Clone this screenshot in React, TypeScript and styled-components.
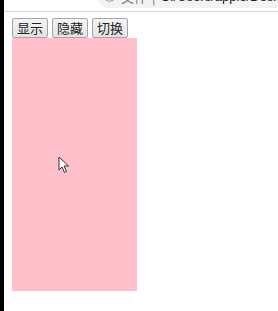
import React from "react";
import styled, { createGlobalStyle } from "styled-components";

const Global = createGlobalStyle`
  html, body { margin: 0; padding: 0; background: #fff; }
  body { font-family: "Noto Sans CJK SC", "Liberation Sans", sans-serif; }
`;

const Frame = styled.div`
  width: 278px;
  height: 311px;
  display: flex;
  overflow: hidden;
`;

const LeftEdge = styled.div`
  width: 4px;
  flex: none;
  background: #000;
`;

const Window = styled.div`
  flex: 1;
  display: flex;
  flex-direction: column;
  min-width: 0;
`;

const Chrome = styled.div`
  height: 11px;
  flex: none;
  overflow: hidden;
  border-bottom: 1px solid #d9d9d9;
  background: #fff;
`;

const ChromeInner = styled.div`
  display: flex;
  align-items: center;
  height: 24px;
  margin-top: -16px;
  padding-left: 11px;
  gap: 14px;
  color: #b0b0b0;
  font-size: 14px;
  font-family: "Liberation Sans", sans-serif;
`;

const NavIcon = styled.span`
  width: 14px;
  text-align: center;
`;

const Pill = styled.div`
  flex: 1;
  height: 24px;
  margin-left: 0;
  border-radius: 12px 0 0 12px;
  background: #f1f3f4;
  display: flex;
  align-items: center;
  padding-left: 6px;
  gap: 5px;
  font-size: 13px;
  white-space: nowrap;
  color: #777;
`;

const Label = styled.span`
  color: #777;
  font-family: "Noto Sans CJK SC", sans-serif;
`;

const Url = styled.span`
  color: #202124;
  font-family: "Liberation Sans", sans-serif;
`;

const Page = styled.div`
  padding: 6px 8px 0 8px;
  display: flex;
  flex-direction: column;
  align-items: flex-start;
`;

const Toolbar = styled.div`
  display: flex;
  gap: 4px;
`;

const Button = styled.button`
  height: 20px;
  width: 36px;
  padding: 0;
  font-size: 13px;
  line-height: 18px;
  font-family: "Noto Sans CJK SC", sans-serif;
  color: #222;
  background: linear-gradient(#f5f5f5, #e3e3e3);
  border: 1px solid #a6a6a6;
  border-radius: 2px;
  margin: 0;
`;

const PinkBox = styled.div`
  width: 125px;
  height: 253px;
  background: #ffc0cb;
  position: relative;
`;

const Cursor = styled.svg`
  position: absolute;
  left: 46px;
  top: 118px;
`;

export default function App() {
  return (
    <>
      <Global />
      <Frame>
        <LeftEdge />
        <Window>
          <Chrome>
            <ChromeInner>
              <NavIcon>←</NavIcon>
              <NavIcon>→</NavIcon>
              <NavIcon>↻</NavIcon>
              <Pill>
                <span>ⓘ</span>
                <Label>文件</Label>
                <Label>|</Label>
                <Url>C:/Users/apple/Desktop/index.html</Url>
              </Pill>
            </ChromeInner>
          </Chrome>
          <Page>
            <Toolbar>
              <Button>显示</Button>
              <Button>隐藏</Button>
              <Button>切换</Button>
            </Toolbar>
            <PinkBox>
              <Cursor width="12" height="18" viewBox="0 0 12 18">
                <path d="M1 1 L1 14 L4 11 L6.5 16.5 L8.5 15.5 L6 10 L10.5 10 Z" fill="#fff" stroke="#333" strokeWidth="1" strokeLinejoin="round" />
              </Cursor>
            </PinkBox>
          </Page>
        </Window>
      </Frame>
    </>
  );
}
